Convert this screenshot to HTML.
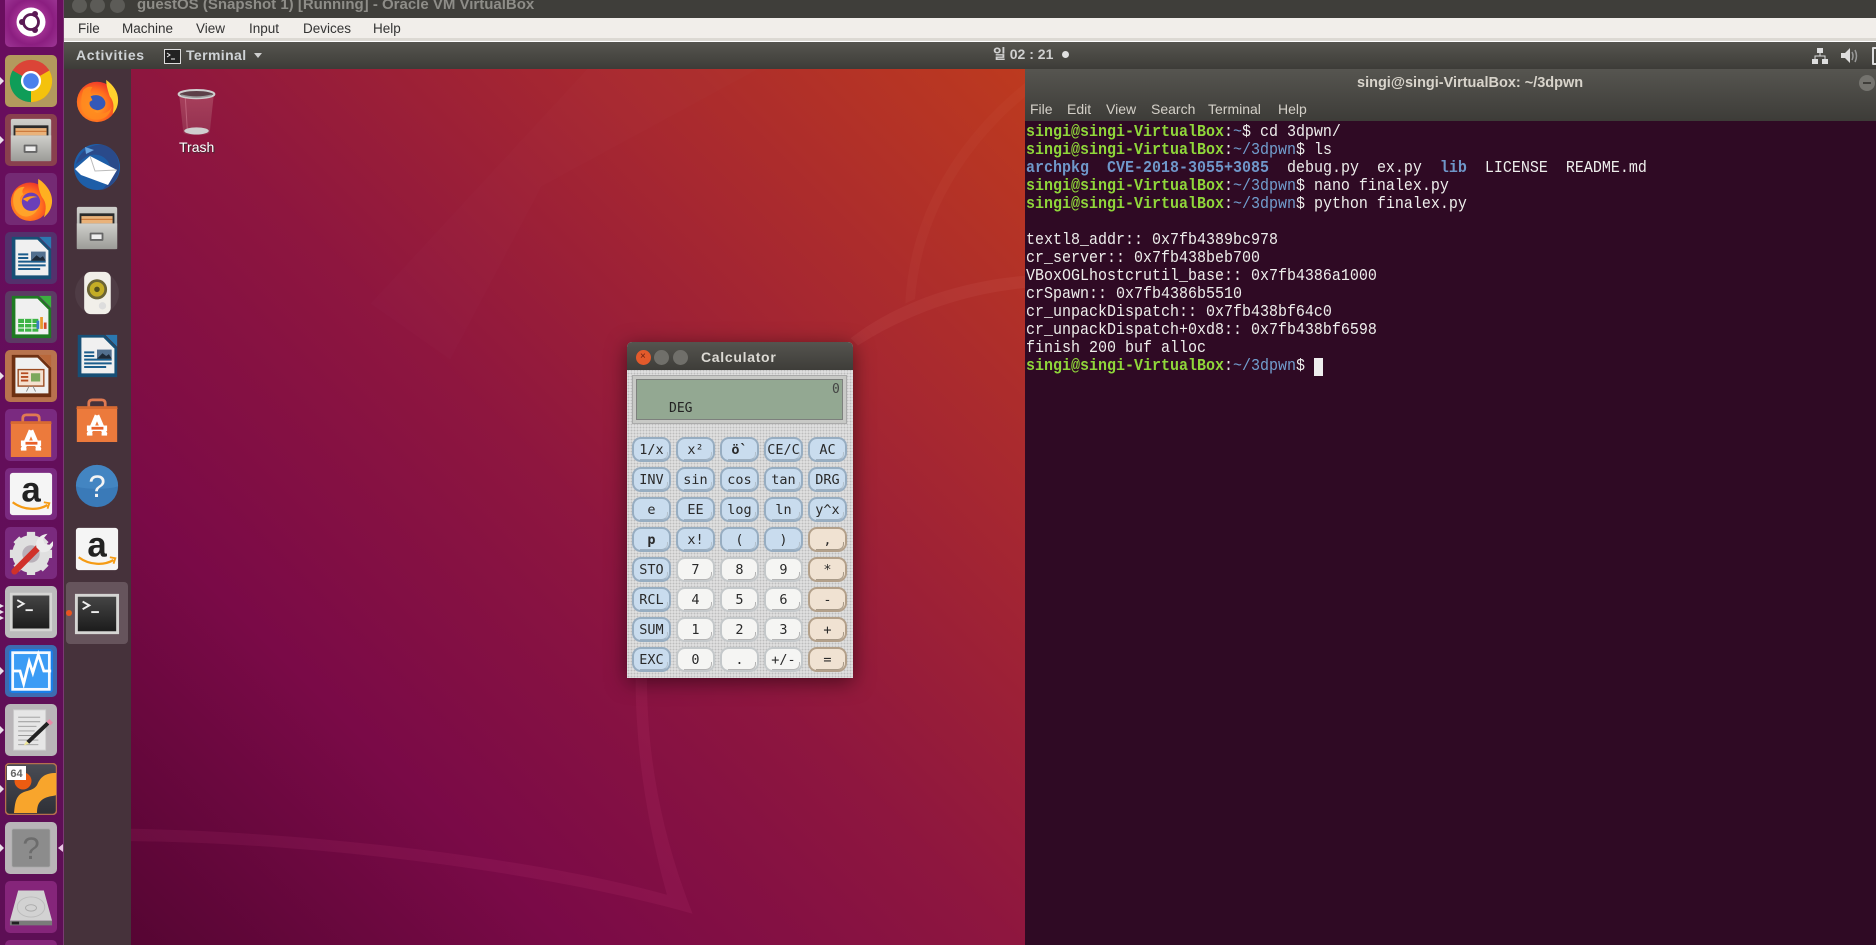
<!DOCTYPE html>
<html lang="en"><head><meta charset="utf-8"><title>guestOS</title>
<style>
*{box-sizing:border-box}
html,body{margin:0;padding:0;width:1876px;height:945px;overflow:hidden;background:#3f3e3a;font-family:"Liberation Sans","Noto Sans CJK KR",sans-serif}
#root{position:absolute;left:0;top:0;width:1876px;height:945px;overflow:hidden;contain:strict}
.a{position:absolute}
.t{position:absolute;white-space:nowrap}
#launcher{left:0;top:0;width:64px;height:945px;background:linear-gradient(#690e5e,#5d0f55);border-right:1px solid #7a3a72}
.tile{position:absolute;left:5px;width:52px;height:52px;border-radius:5px}
.tile svg{position:absolute;left:4px;top:4px;width:44px;height:44px}
.dk{position:absolute;left:75px;width:44px;height:44px}
.arr{position:absolute;left:0;width:0;height:0;border-left:4px solid #e9dfe9;border-top:4px solid transparent;border-bottom:4px solid transparent}
#desk{left:131px;top:69px;width:894px;height:876px;background:linear-gradient(45deg,#560533 0%,#7a0a47 25%,#8e163f 50%,#a72830 75%,#bd3a1f 100%)}
#term{left:1025px;top:69px;width:851px;height:876px;background:#2f0a24}
pre{margin:0;font-family:"Liberation Mono",monospace;font-size:17px;line-height:18px;color:#eeeeec;transform:scaleX(.882);transform-origin:0 0;position:absolute;left:1px;top:55px}
pre b{color:#8fd63a;font-weight:bold}pre i{font-style:normal;color:#729fcf}pre u{text-decoration:none;color:#6f97c9;font-weight:bold}
#calc{left:627px;top:342px;width:226px;height:336px;border-radius:5px 5px 0 0;box-shadow:0 4px 20px rgba(0,0,0,.5);background:#dedede radial-gradient(circle,#bdbdbd .7px,transparent 1px) 0 0/3px 3px;overflow:hidden}
#grid{position:absolute;left:5px;top:95px;display:grid;grid-template-columns:repeat(5,39px);grid-auto-rows:25px;column-gap:5px;row-gap:5px}
.b{position:relative;border-radius:9px;border:2px solid #97adc1;background:#c9dcee;text-align:center;font:13.5px/23px "DejaVu Sans Mono","Liberation Mono",monospace;color:#2a2a2a}
.b:after{content:"";position:absolute;left:6px;right:1px;bottom:0;height:7px;border-bottom:1px solid #9fb0c0;border-right:1px solid #b4c2ce;border-radius:0 0 6px 0}
.w{background:#f5f5f3;border-color:#c4c8ca}.w:after{border-color:#b5b5b5}
.o{background:#f0e2d2;border-color:#b3a08a}.o:after{border-color:#a89a88}
</style></head><body>
<div id="root">
<svg width="0" height="0" style="position:absolute"><defs>
<linearGradient id="gy" x1="0" y1="0" x2="0" y2="1"><stop offset="0" stop-color="#cfcfcb"/><stop offset="1" stop-color="#9c9c98"/></linearGradient>
<linearGradient id="scr" x1="0" y1="0" x2="0" y2="1"><stop offset="0" stop-color="#454545"/><stop offset="1" stop-color="#1c1c1c"/></linearGradient>
<linearGradient id="vb" x1="0" y1="0" x2="0" y2="1"><stop offset="0" stop-color="#4a4c54"/><stop offset="1" stop-color="#2e3037"/></linearGradient>
<linearGradient id="tr" x1="0" y1="0" x2="0" y2="1"><stop offset="0" stop-color="#a8405c"/><stop offset="1" stop-color="#93304f"/></linearGradient>
<radialGradient id="ffg" cx=".4" cy=".6" r=".7"><stop offset="0" stop-color="#ffb52a"/><stop offset=".6" stop-color="#ff6a1e"/><stop offset="1" stop-color="#e8242f"/></radialGradient>
<symbol id="chrome" viewBox="0 0 48 48"><circle cx="24" cy="24" r="23" fill="#db4437"/><path d="M24 24L44 12.500A23 23 0 0 1 24 47Z" fill="#f4c20d"/><path d="M24 24L24 47A23 23 0 0 1 4 12.500Z" fill="#0f9d58"/><circle cx="24" cy="24" r="11" fill="#fff"/><circle cx="24" cy="24" r="8.500" fill="#4a80ec"/></symbol>
<symbol id="files" viewBox="0 0 48 48"><rect x="2" y="1" width="44" height="46" rx="2" fill="url(#gy)"/><rect x="5" y="8" width="38" height="12" fill="#2b2b2b"/><rect x="7" y="11" width="34" height="8" fill="#e9b27a"/><rect x="7" y="14" width="34" height="1" fill="#c4692a"/><rect x="2" y="19" width="44" height="28" fill="url(#gy)"/><rect x="16" y="29" width="15" height="9" rx="1" fill="#666"/><rect x="18" y="31" width="11" height="5" fill="#eee"/></symbol>
<symbol id="ff1" viewBox="0 0 48 48"><circle cx="24" cy="25" r="22" fill="url(#ffg)"/><path d="M34 1c8 6 13 13 13 22 0 6-2 11-6 15 2-8 1-14-3-19-2-6-4-12-4-18z" fill="#ffd22e"/><path d="M9 12c4-4 8-4 10-3-2 3-3 5-1 8 6-2 13 1 15 7 1 6-4 12-12 11 5 5 16 3 19-5-1 10-10 16-20 14C10 42 3 31 9 12z" fill="#ff8a1e" opacity=".85"/><path d="M17 19c6-3 14-1 16 6 1 5-3 9-9 9-6-1-9-5-8-9l3-2z" fill="#3558b8"/></symbol>
<symbol id="ff2" viewBox="0 0 48 48"><circle cx="23" cy="27" r="21" fill="url(#ffg)"/><path d="M32 2c9 6 15 15 15 24 0 8-4 14-9 18 3-9 3-16-2-22-3-6-5-13-4-20z" fill="#ffb020"/><path d="M6 17c3-5 8-7 11-6-3 3-3 6-1 8-5 2-5 8-2 12 5 6 14 6 19 0-2 8-9 13-16 12C6 41 2 27 6 17z" fill="#ffa32a"/><circle cx="24" cy="27" r="10" fill="#6a3fb8"/><path d="M15 24c5-3 11-4 16-2-6 0-9 2-11 5z" fill="#ff9d1e"/></symbol>
<symbol id="tb" viewBox="0 0 48 48"><circle cx="24" cy="24" r="23" fill="#1e5ea8"/><path d="M3 21C6 9 18 0 30 2 40 4 47 14 46 26c-1 11-9 19-17 21 5-5 9-10 9-18C38 17 28 8 14 13z" fill="#2a4a8a"/><path d="M2 26L17 13 44 27 35 42 8 32z" fill="#fff"/><path d="M17 13l5 15 22-1" fill="none" stroke="#bbb" stroke-width="1"/><path d="M12 4l9 3-8 4z" fill="#6aa5e0"/></symbol>
<symbol id="spk" viewBox="0 0 48 48"><circle cx="24" cy="24" r="24" fill="#6a5a65" opacity=".25"/><rect x="10" y="1" width="29" height="46" rx="7" fill="#f1efe9"/><circle cx="24" cy="20" r="11" fill="#6b6435"/><circle cx="24" cy="20" r="8" fill="#c4ad26"/><circle cx="24" cy="20" r="3" fill="#53501f"/><circle cx="30" cy="38" r="4" fill="#ddd"/></symbol>
<symbol id="writer" viewBox="0 0 48 48"><path d="M3 1h29l14 14v32H3z" fill="#174f76"/><path d="M7 4h24l12 12v27H7z" fill="#f0f0f0"/><path d="M33 1h13v13z" fill="#2b78b0"/><path d="M10 20h11M10 24h11M10 28h30M10 32h30M10 36h24" stroke="#1c5d8c" stroke-width="2.200"/><rect x="24" y="17" width="16" height="10" fill="#53708f"/><path d="M24 27l6-6 4 3 3-2 3 5z" fill="#1e2a38"/></symbol>
<symbol id="calcic" viewBox="0 0 48 48"><path d="M3 1h29l14 14v32H3z" fill="#1f7a22"/><path d="M7 4h24l12 12v27H7z" fill="#f0f0f0"/><path d="M33 1h13v13z" fill="#3bb03f"/><rect x="10" y="26" width="22" height="14" fill="#3db445"/><path d="M10 31h22M10 36h22M17 26v14M25 26v14" stroke="#fff"/><rect x="30" y="28" width="3" height="9" fill="#3b7dc8"/><rect x="34" y="24" width="3" height="13" fill="#e89a2a"/><rect x="38" y="30" width="3" height="7" fill="#d64a2a"/></symbol>
<symbol id="impress" viewBox="0 0 48 48"><path d="M3 1h29l14 14v32H3z" fill="#6e3012"/><path d="M7 4h24l12 12v27H7z" fill="#f0f0f0"/><path d="M33 1h13v13z" fill="#b8673a"/><rect x="10" y="17" width="28" height="18" fill="#f5e0cf" stroke="#9a4a20" stroke-width="1.500"/><path d="M13 21h8M13 25h8M13 29h8" stroke="#b54b20" stroke-width="2"/><rect x="24" y="21" width="10" height="9" fill="#7ca85c"/><path d="M22 35l-3 6M26 35l3 6" stroke="#888"/></symbol>
<symbol id="bag" viewBox="0 0 48 48"><path d="M15 12V6q0-4 4-4h10q4 0 4 4v6" fill="none" stroke="#e07a52" stroke-width="3"/><path d="M2 9h44v39H2z" fill="#ec7a3c"/><path d="M2 9h44l1 3H1z" fill="#c95f2c" opacity=".6"/><path d="M24 19l-9 21M24 19l9 21" fill="none" stroke="#fff" stroke-width="5"/><rect x="13" y="30" width="22" height="6" fill="#fff"/><rect x="18" y="31.500" width="13" height="3" fill="#e8602a"/><rect x="13" y="38" width="6" height="3" fill="#fff"/><rect x="29" y="38" width="6" height="3" fill="#fff"/></symbol>
<symbol id="amz" viewBox="0 0 48 48"><rect x="1" y="1" width="46" height="46" rx="3" fill="#f5f5f5"/><text x="24" y="32" text-anchor="middle" font-family="Liberation Sans" font-weight="bold" font-size="38" fill="#222">a</text><path d="M4 33c12 9 28 9 38 3" fill="none" stroke="#f59b14" stroke-width="2.500"/><path d="M38 33l6 1-2 6" fill="none" stroke="#f59b14" stroke-width="2"/></symbol>
<symbol id="help" viewBox="0 0 48 48"><circle cx="24" cy="24" r="23" fill="#3a7ab8"/><path d="M1 24a23 23 0 0 1 46 0c-6 4-40 4-46 0z" fill="#4a8cc8" opacity=".6"/><text x="24" y="36" text-anchor="middle" font-family="Liberation Sans" font-size="34" fill="#f4f4f4">?</text></symbol>
<symbol id="set" viewBox="0 0 48 48"><circle cx="24" cy="25" r="12" fill="#b9b0b9"/><circle cx="24" cy="25" r="15" fill="none" stroke="#e0e0e0" stroke-width="11"/><g stroke="#e0e0e0" stroke-width="9"><path d="M24 1v8M24 41v7M1 25h8M39 25h8M8 9l6 6M34 35l6 6M40 9l-6 6M8 41l6-6"/></g><path d="M6 44L34 16" stroke="#d0312a" stroke-width="7" stroke-linecap="round"/><path d="M30 18c-2-7 3-14 12-15l-5 6 2 5 5 1 5-5c0 9-6 14-14 13z" fill="#ececec"/></symbol>
<symbol id="termic" viewBox="0 0 48 48"><rect x="1" y="3" width="46" height="42" fill="#d5d5d3"/><rect x="4" y="6" width="40" height="36" fill="url(#scr)"/><path d="M9 11l7 4-7 4" fill="none" stroke="#eee" stroke-width="2"/><path d="M18 22h8" stroke="#eee" stroke-width="2"/></symbol>
<symbol id="mon" viewBox="0 0 48 48"><rect x="0" y="0" width="48" height="48" rx="4" fill="#1a7ee8"/><rect x="4" y="4" width="40" height="40" fill="#3b9cf5" stroke="#f4f9ff" stroke-width="3"/><path d="M4 24h8l4 14 6-24 4 12 6-20 6 18h8" fill="none" stroke="#fff" stroke-width="3"/></symbol>
<symbol id="edit" viewBox="0 0 48 48"><rect x="5" y="2" width="35" height="44" fill="#e6e6e6" stroke="#ccc"/><path d="M10 10h24M10 15h24M10 20h20M10 25h18M10 30h16M10 35h22M10 40h22" stroke="#999"/><path d="M19 36L41 15l3 3-22 21z" fill="#222"/><path d="M41 15l3-3 4 4-3 3z" fill="#e88aa8"/><path d="M19 36l3 3-6 2z" fill="#f0e89a"/></symbol>
<symbol id="vbox" viewBox="0 0 52 52"><rect x=".5" y=".5" width="51" height="51" rx="4" fill="url(#vb)" stroke="#b56f4e" stroke-width="1.500"/><circle cx="18" cy="18" r="8.500" fill="#ec5c12"/><path d="M51 10C40 10 36 14 33 20 30 28 22 27 17 30 10 34 10 42 9 50H32C32 42 34 38 40 35 44 33 50 33 51 32Z" fill="#f8a52c"/><rect x="2" y="3" width="19" height="14" fill="#fff"/><text x="11.500" y="14" text-anchor="middle" font-family="Liberation Sans" font-weight="bold" font-size="11" fill="#666">64</text></symbol>
<symbol id="unk" viewBox="0 0 48 48"><rect x="3" y="3" width="42" height="42" rx="2" fill="#8c8c8c" stroke="#b0b0b0"/><text x="24" y="36" text-anchor="middle" font-family="Liberation Sans" font-size="34" fill="#6c6c6c">?</text></symbol>
<symbol id="disk" viewBox="0 0 48 48"><path d="M10 6h28l9 33H1z" fill="#d2d2d2"/><path d="M1 39h46v5H1z" fill="#7a7a7a"/><rect x="3" y="40" width="8" height="3" fill="#222"/><ellipse cx="24" cy="24" rx="15" ry="11" fill="none" stroke="#bbb"/><ellipse cx="24" cy="25" rx="6" ry="3.500" fill="none" stroke="#aaa"/></symbol>
<symbol id="trash" viewBox="0 0 38 46"><path d="M2 5l4 37q0 3 13 3t13-3l4-37z" fill="url(#tr)"/><path d="M8 8l2 32" stroke="#d07a90" stroke-width="1" opacity=".6"/><ellipse cx="19" cy="41" rx="12" ry="3.500" fill="#cfcfcf"/><ellipse cx="19" cy="5" rx="17.500" ry="4" fill="#5c4048" stroke="#cfcfcf" stroke-width="2"/><path d="M4 6q15 4 30 0" fill="none" stroke="#9a9a9a" stroke-width="1.500"/></symbol>
</defs></svg>

<div class="a" id="launcher"></div>
<div class="tile" style="top:-5px;background:radial-gradient(circle at 50% 52%,#c44fb0,#8b1e80 60%,#a03a98)"><svg viewBox="0 0 44 44" style="top:5px;left:4px"><circle cx="22" cy="22" r="14.500" fill="#fff"/><circle cx="22" cy="22" r="7.500" fill="none" stroke="#5b1a55" stroke-width="2.800"/><circle cx="26" cy="14" r="3" fill="#5b1a55"/><circle cx="13" cy="22" r="3" fill="#5b1a55"/><circle cx="26" cy="30" r="3" fill="#5b1a55"/></svg></div>
<div class="tile" style="top:55px;background:#b39a5d"><svg><use href="#chrome"/></svg></div>
<div class="tile" style="top:114px;background:#89404e"><svg><use href="#files"/></svg></div>
<div class="tile" style="top:173px;background:#742a74"><svg><use href="#ff2"/></svg></div>
<div class="tile" style="top:232px;background:#54306c"><svg><use href="#writer"/></svg></div>
<div class="tile" style="top:291px;background:#5c3a64"><svg><use href="#calcic"/></svg></div>
<div class="tile" style="top:350px;background:#b8734e"><svg><use href="#impress"/></svg></div>
<div class="tile" style="top:409px;background:#7a2a80"><svg><use href="#bag"/></svg></div>
<div class="tile" style="top:468px;background:#7a2a80"><svg><use href="#amz"/></svg></div>
<div class="tile" style="top:527px;background:#7a2a7e"><svg><use href="#set"/></svg></div>
<div class="tile" style="top:586px;background:#bcbcbc"><svg><use href="#termic"/></svg></div>
<div class="tile" style="top:645px;background:#3d6bb0"><svg><use href="#mon"/></svg></div>
<div class="tile" style="top:704px;background:#b9b5b8"><svg><use href="#edit"/></svg></div>
<div class="tile" style="top:763px"><svg viewBox="0 0 52 52" style="left:0;top:0;width:52px;height:52px"><use href="#vbox"/></svg></div>
<div class="tile" style="top:822px;background:#b9b5b8"><svg><use href="#unk"/></svg></div>
<div class="tile" style="top:881px;background:#85257a"><svg><use href="#disk"/></svg></div>
<div class="tile" style="top:940px;height:5px;border-radius:5px 5px 0 0;background:#85257a"></div>
<div class="arr" style="top:77px"></div><div class="arr" style="top:136px"></div><div class="arr" style="top:372px"></div>
<div class="arr" style="top:604px;border-width:2px 0 2px 4px"></div><div class="arr" style="top:610px;border-width:2px 0 2px 4px"></div><div class="arr" style="top:616px;border-width:2px 0 2px 4px"></div>
<div class="arr" style="top:667px"></div><div class="arr" style="top:726px"></div><div class="arr" style="top:785px"></div><div class="arr" style="top:844px"></div>
<div class="a" style="left:58px;top:844px;width:0;height:0;border-right:5px solid #e9c8e4;border-top:4px solid transparent;border-bottom:4px solid transparent"></div>

<div class="a" style="left:64px;top:0;width:1812px;height:18px;background:#3f3e3a"></div>
<div class="a" style="left:72px;top:-2px;width:15px;height:15px;border-radius:50%;background:#5c5b57"></div>
<div class="a" style="left:90px;top:-2px;width:15px;height:15px;border-radius:50%;background:#5c5b57"></div>
<div class="a" style="left:110px;top:-2px;width:15px;height:15px;border-radius:50%;background:#5c5b57"></div>
<div class="t" style="left:137px;top:-4px;font-size:15px;font-weight:bold;line-height:18px;color:#8e8d88">guestOS (Snapshot 1) [Running] - Oracle VM VirtualBox</div>
<div class="a" style="left:64px;top:18px;width:1812px;height:24px;background:#f1eeea;border-bottom:1px solid #fff;box-shadow:inset 0 -3px 0 #dcd9d3"></div>
<div class="t" style="left:78px;top:21px;font-size:13.500px;line-height:16px;color:#333">File</div>
<div class="t" style="left:122px;top:21px;font-size:13.500px;line-height:16px;color:#333">Machine</div>
<div class="t" style="left:196px;top:21px;font-size:13.500px;line-height:16px;color:#333">View</div>
<div class="t" style="left:249px;top:21px;font-size:13.500px;line-height:16px;color:#333">Input</div>
<div class="t" style="left:303px;top:21px;font-size:13.500px;line-height:16px;color:#333">Devices</div>
<div class="t" style="left:373px;top:21px;font-size:13.500px;line-height:16px;color:#333">Help</div>

<div class="a" style="left:64px;top:42px;width:1812px;height:27px;background:linear-gradient(#56554f,#3d3c38)"></div>
<div class="t" style="left:76px;top:47px;font-size:14px;font-weight:bold;line-height:16px;letter-spacing:.65px;color:#cfd3d6">Activities</div>
<svg class="a" style="left:164px;top:49px" width="17" height="15"><rect x=".5" y=".5" width="16" height="14" fill="#222" stroke="#ddd"/><path d="M3 4l3 2-3 2M7 10h4" stroke="#eee" fill="none"/></svg>
<div class="t" style="left:186px;top:47px;font-size:14px;font-weight:bold;line-height:16px;letter-spacing:.4px;color:#cfd3d6">Terminal</div>
<div class="a" style="left:254px;top:53px;width:0;height:0;border-top:5px solid #cfcfcf;border-left:4.500px solid transparent;border-right:4.500px solid transparent"></div>
<div class="t" style="left:993px;top:46px;font-size:14px;font-weight:bold;line-height:17px;color:#d0d0d0">일 02 : 21</div>
<div class="a" style="left:1062px;top:51px;width:7px;height:7px;border-radius:50%;background:#e0e0e0"></div>
<svg class="a" style="left:1812px;top:47px" width="16" height="18"><rect x="5" y="1" width="6" height="5" fill="#ddd"/><rect x="0" y="12" width="6" height="5" fill="#ddd"/><rect x="10" y="12" width="6" height="5" fill="#ddd"/><path d="M8 6v3M3 12V9h10v3" stroke="#ddd" fill="none"/></svg>
<svg class="a" style="left:1840px;top:47px" width="18" height="18"><path d="M1 6h4l5-5v15l-5-5H1z" fill="#ddd"/><path d="M12 5q2 4 0 8M15 3q3 6 0 12" stroke="#999" fill="none" stroke-width="1.500"/></svg>
<div class="a" style="left:1872px;top:47px;width:10px;height:18px;border:2px solid #ddd;border-radius:1px"></div>

<div class="a" id="desk">
<svg class="a" style="left:0;top:0" width="894" height="876" viewBox="0 0 1568 1568" preserveAspectRatio="none">
<path d="M420 420L800 0H1100L720 210 560 520z" fill="#fff" opacity=".012"/>
<path d="M0 1360C300 1365 700 1410 940 1478 905 1350 885 1220 885 1090L905 1090C905 1230 930 1370 985 1512 700 1430 300 1385 0 1382Z" fill="#ff6aa0" opacity=".08"/>
<path d="M1262 482C1340 420 1450 380 1568 370L1568 392C1460 402 1360 440 1275 495Z" fill="#ffb0a0" opacity=".07"/>
<path d="M1568 25C1440 130 1365 270 1358 420L1375 412C1385 280 1450 150 1568 50Z" fill="#ffb0a0" opacity=".04"/>
</svg></div>
<svg class="a" style="left:177px;top:89px" width="39" height="47"><use href="#trash"/></svg>
<div class="t" style="left:179px;top:139px;font-size:14px;line-height:16px;color:#fff;text-shadow:1px 1px 1px #333">Trash</div>

<div class="a" style="left:64px;top:69px;width:67px;height:876px;background:#46323b"></div>
<svg class="dk" style="top:79px"><use href="#ff1"/></svg>
<svg class="dk" style="top:143px;left:73px;width:48px;height:48px"><use href="#tb"/></svg>
<svg class="dk" style="top:206px"><use href="#files"/></svg>
<svg class="dk" style="top:271px"><use href="#spk"/></svg>
<svg class="dk" style="top:334px"><use href="#writer"/></svg>
<svg class="dk" style="top:398px"><use href="#bag"/></svg>
<svg class="dk" style="top:464px"><use href="#help"/></svg>
<svg class="dk" style="top:527px"><use href="#amz"/></svg>
<div class="a" style="left:66px;top:582px;width:62px;height:62px;border-radius:4px;background:#66545c"></div>
<svg class="dk" style="top:591px;left:74px;width:46px;height:46px"><use href="#termic"/></svg>
<div class="a" style="left:66px;top:610px;width:6px;height:6px;border-radius:50%;background:#e95420"></div>

<div class="a" id="term">
<div class="a" style="left:0;top:0;width:851px;height:52px;background:linear-gradient(#565550,#3d3c38)"></div>
<div class="t" style="left:332px;top:6px;font-size:14.500px;font-weight:bold;line-height:17px;color:#d8d4cb">singi@singi-VirtualBox: ~/3dpwn</div>
<div class="a" style="left:834px;top:6px;width:16px;height:16px;border-radius:50%;background:#74736e"></div>
<div class="a" style="left:838px;top:13px;width:8px;height:2px;background:#3f3e3a"></div>
<div class="t" style="left:5px;top:32px;font-size:14px;line-height:16px;color:#d4d0c8">File</div>
<div class="t" style="left:42px;top:32px;font-size:14px;line-height:16px;color:#d4d0c8">Edit</div>
<div class="t" style="left:81px;top:32px;font-size:14px;line-height:16px;color:#d4d0c8">View</div>
<div class="t" style="left:126px;top:32px;font-size:14px;line-height:16px;color:#d4d0c8">Search</div>
<div class="t" style="left:183px;top:32px;font-size:14px;line-height:16px;color:#d4d0c8">Terminal</div>
<div class="t" style="left:253px;top:32px;font-size:14px;line-height:16px;color:#d4d0c8">Help</div>
<pre><b>singi@singi-VirtualBox</b>:<i>~</i>$ cd 3dpwn/
<b>singi@singi-VirtualBox</b>:<i>~/3dpwn</i>$ ls
<u>archpkg</u>  <u>CVE-2018-3055+3085</u>  debug.py  ex.py  <u>lib</u>  LICENSE  README.md
<b>singi@singi-VirtualBox</b>:<i>~/3dpwn</i>$ nano finalex.py
<b>singi@singi-VirtualBox</b>:<i>~/3dpwn</i>$ python finalex.py

textl8_addr:: 0x7fb4389bc978
cr_server:: 0x7fb438beb700
VBoxOGLhostcrutil_base:: 0x7fb4386a1000
crSpawn:: 0x7fb4386b5510
cr_unpackDispatch:: 0x7fb438bf64c0
cr_unpackDispatch+0xd8:: 0x7fb438bf6598
finish 200 buf alloc
<b>singi@singi-VirtualBox</b>:<i>~/3dpwn</i>$ </pre>
<div class="a" style="left:289px;top:289px;width:9px;height:18px;background:#eee"></div>
</div>

<div class="a" id="calc">
<div class="a" style="left:0;top:0;width:226px;height:28px;background:linear-gradient(#55544f,#3e3d39)"></div>
<div class="a" style="left:9px;top:8px;width:15px;height:15px;border-radius:50%;background:#e35a2b"></div>
<div class="a" style="left:27px;top:8px;width:15px;height:15px;border-radius:50%;background:#706f6a"></div>
<div class="a" style="left:46px;top:8px;width:15px;height:15px;border-radius:50%;background:#706f6a"></div>
<div class="t" style="left:13px;top:8px;font-size:10px;line-height:14px;color:#6a2010">×</div>
<div class="t" style="left:74px;top:7px;font-size:14px;font-weight:bold;line-height:16px;letter-spacing:.7px;color:#dcdad4">Calculator</div>
<div class="a" style="left:5px;top:33px;width:215px;height:49px;background:#c8c9c6;border:1px solid #aaa"></div>
<div class="a" style="left:9px;top:37px;width:207px;height:41px;background:#93a892;border:1px solid #7d807d"></div>
<div class="t" style="left:205px;top:40px;font:13px/16px 'DejaVu Sans Mono',monospace;color:#444">0</div>
<div class="t" style="left:42px;top:59px;font:13px/16px 'DejaVu Sans Mono',monospace;color:#222">DEG</div>
<div id="grid">
<div class="b">1/x</div><div class="b">x²</div><div class="b"><b>ö`</b></div><div class="b">CE/C</div><div class="b">AC</div>
<div class="b">INV</div><div class="b">sin</div><div class="b">cos</div><div class="b">tan</div><div class="b">DRG</div>
<div class="b">e</div><div class="b">EE</div><div class="b">log</div><div class="b">ln</div><div class="b">y^x</div>
<div class="b"><b>p</b></div><div class="b">x!</div><div class="b">(</div><div class="b">)</div><div class="b o">,</div>
<div class="b">STO</div><div class="b w">7</div><div class="b w">8</div><div class="b w">9</div><div class="b o">*</div>
<div class="b">RCL</div><div class="b w">4</div><div class="b w">5</div><div class="b w">6</div><div class="b o">-</div>
<div class="b">SUM</div><div class="b w">1</div><div class="b w">2</div><div class="b w">3</div><div class="b o">+</div>
<div class="b">EXC</div><div class="b w">0</div><div class="b w">.</div><div class="b w">+/-</div><div class="b o">=</div>
</div></div>
</div>
</body></html>
